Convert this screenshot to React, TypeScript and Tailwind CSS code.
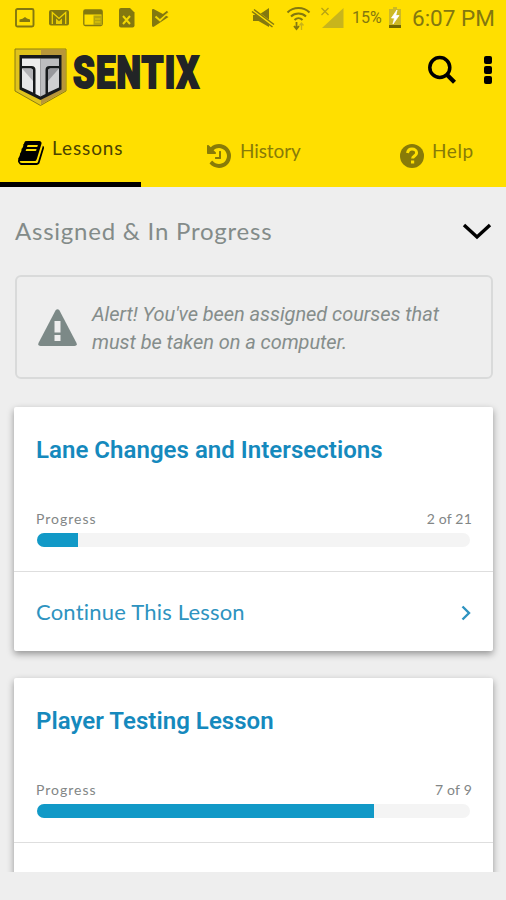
/**
 * Lessons screen
 *
 * Status bar, branded header with tabs, and the list of assigned lessons.
 */

import type { ReactNode } from "react";

// ---------------------------------------------------------------------------
// Types
// ---------------------------------------------------------------------------

interface Lesson {
  title: string;
  done: number;
  total: number;
  percent: number;
  action?: string;
}

const LESSONS: Lesson[] = [
  { title: "Lane Changes and Intersections", done: 2, total: 21, percent: 9.5, action: "Continue This Lesson" },
  { title: "Player Testing Lesson", done: 7, total: 9, percent: 77.8 },
];

// ---------------------------------------------------------------------------
// Status bar
// ---------------------------------------------------------------------------

function StatusBar() {
  return (
    <div className="flex h-9 items-center justify-between pl-[15px] pr-3 text-[#83780f]">
      <div className="flex items-center gap-[14px]">
        <svg width="20" height="20" viewBox="0 0 20 20" fill="none">
          <rect x="1" y="1" width="17.500" height="17.500" rx="1.500" stroke="currentColor" strokeWidth="1.900" />
          <path d="M4.500 14v-2.500l3-.8 2.500-1.800 2 1.600 3 1v2.500z" fill="currentColor" />
        </svg>
        <svg width="20" height="20" viewBox="0 0 20 20" fill="none">
          <rect x="0" y="2" width="20" height="15.500" rx="2" fill="currentColor" />
          <path d="M4 16.500V7l6 5.300L16 7v9.500h-3.200v-5L10 14l-2.800-2.500v5z" fill="currentColor" />
          <path d="M3.300 16V4.500l6.700 6 6.700-6V16" stroke="#f0d300" strokeWidth="1.300" />
          <path d="M7 16v-5.500l3 2.700 3-2.700V16z" fill="#e8cc04" />
        </svg>
        <svg width="20" height="20" viewBox="0 0 20 20" fill="none">
          <rect x=".8" y="2" width="18.400" height="15.500" rx="1.500" stroke="currentColor" strokeWidth="1.300" />
          <path d="M1 2h18v4.500H1z" fill="currentColor" />
          <path d="M10.500 7.500h8.500V17h-8.500z" fill="#b5a50f" />
          <path d="M12 11h5.500M12 14h5.500" stroke="#e8cc04" strokeWidth="1" />
        </svg>
        <svg width="20" height="20" viewBox="0 0 20 20" fill="none">
          <path d="M2 2a2 2 0 0 1 2-2h9l4.500 4.500V17.500a2 2 0 0 1-2 2H4a2 2 0 0 1-2-2z" fill="currentColor" />
          <path d="M6 8l7 8M13 8l-7 8" stroke="#f3d702" strokeWidth="2" />
        </svg>
        <svg width="20" height="20" viewBox="0 0 20 20" fill="none">
          <path d="M1 2.200C1 1 2 .6 3 1.200L17.500 9 2.800 18.800C2 19.200 1 18.800 1 17.600z" fill="currentColor" />
          <path d="M4.500 8.500l4.500 4L17.500 4" stroke="#f3d702" strokeWidth="2" />
          <path d="M9 9.500l7.500-6" stroke="currentColor" strokeWidth="1.800" />
        </svg>
      </div>

      <div className="flex items-center">
        <svg width="24" height="22" viewBox="0 0 24 22" fill="none">
          <path d="M2 8h5.500L18 1v19L7.500 14H2z" fill="currentColor" />
          <path d="M1 2.500L23 19" stroke="#ffdf00" strokeWidth="4" />
          <path d="M1 4.500L21.500 20M3 2.500L23 17.500" stroke="currentColor" strokeWidth="1.500" />
        </svg>
        <svg className="ml-[11px]" width="25" height="26" viewBox="0 0 25 26" fill="none">
          <g stroke="currentColor" strokeWidth="2">
            <path d="M1.500 7.500c6-6 16-6 22 0" />
            <path d="M5 11.500c4-4 11-4 15 0" />
            <path d="M8.500 15c2.500-2.500 5.500-2.500 8 0" />
          </g>
          <path d="M10.500 17v6M8 21l2.500 3 2.500-3" stroke="currentColor" strokeWidth="1.800" />
          <path d="M15.500 25v-6M13.500 20.500l2-2.500 2 2.500" stroke="#c9b318" strokeWidth="1.300" />
        </svg>
        <svg className="ml-[9px]" width="24" height="24" viewBox="0 0 24 24" fill="none">
          <path d="M23.500 2v20H2z" fill="#c8b51c" />
          <path d="M1.500 2l7 7M8.500 2l-7 7" stroke="#b7a313" strokeWidth="1.300" />
        </svg>
        <span className="ml-[8px] w-[31px] whitespace-nowrap font-[Roboto,sans-serif] text-[16px] leading-none">15%</span>
        <svg className="ml-[5px]" width="14" height="22" viewBox="0 0 14 22" fill="none">
          <path d="M5 0h4v2h4v19H1V2h4z" fill="#cdb925" />
          <path d="M1 18h12v3H1z" fill="#716800" />
          <path d="M9 3L3.500 11h3L5 17l6-8.500H7.800z" fill="white" stroke="white" strokeWidth=".8" />
        </svg>
        <span className="ml-[10px] w-[82px] whitespace-nowrap font-[Roboto,sans-serif] text-[22.500px] leading-none">6:07 PM</span>
      </div>
    </div>
  );
}

// ---------------------------------------------------------------------------
// Brand logo: shield and wordmark
// ---------------------------------------------------------------------------

function Logo() {
  return (
    <svg className="overflow-visible" width="188" height="60" viewBox="0 0 188 60">
      <path d="M1 1h51v42L26.500 57.500 1 43z" fill="#e0c31c" stroke="#8a7d14" strokeWidth="1" />
      <path d="M27 1.500h24.500V42.500L27 56.500z" fill="#b8963a" />
      <path d="M5.500 7h42v34.500L26.500 52 5.500 41.500z" fill="#17191b" />
      <path d="M8 10.500h18.500v38L21.500 46V22q0-4-4-4H8z" fill="#ededed" />
      <path d="M26.500 10.500H45V18h-9.500q-4 0-4 4v24l-5 2.500z" fill="#bcbcbf" />
      <path d="M8 20.500h8.500q2.500 0 2.500 2.500V44.500L8 39.500z" fill="#e6e6e8" />
      <path d="M8 20.500h8.500q2.500 0 2.500 2.500V33z" fill="#b3b3b7" />
      <path d="M45 20.500h-8.500q-2.500 0-2.500 2.500V44.500L45 39.500z" fill="#cfcfd2" />
      <path d="M45 20.500h-8.500q-2.500 0-2.500 2.500V33z" fill="#98989d" />
      <text
        x="59"
        y="39.500"
        textLength="127"
        lengthAdjust="spacingAndGlyphs"
        letterSpacing="1.500"
        fontFamily="Roboto, sans-serif"
        fontWeight="900"
        fontSize="44"
        fill="#222426"
        stroke="#222426"
        strokeWidth="2"
      >
        SENTIX
      </text>
    </svg>
  );
}

// ---------------------------------------------------------------------------
// Tabs
// ---------------------------------------------------------------------------

const BOOK =
  "M1639 478q40 57 18 129l-275 906q-19 64-76.5 107.5t-122.5 43.5h-923q-77 0-148.5-53.5t-99.5-131.5q-24-67-2-127 0-4 3-27t4-37q1-8-3-21.5t-3-19.5q2-11 8-21t16.5-23.5 16.5-23.5q23-38 45-91.5t30-91.5q3-10 .5-30t-.5-28q3-11 17-28t17-23q21-36 42-92t25-90q1-9-2.5-32t.5-28q4-13 22-30.5t22-22.5q19-26 42.5-84.5t27.5-96.5q1-8-3-25.5t-2-26.5q2-8 9-18t18-23 17-21q8-12 16.5-30.5t15-35 16-36 19.5-32 26.5-23.5 36-11.5 47.5 5.5l-1 3q38-9 51-9h761q74 0 114 56t18 130l-274 906q-36 119-71.5 153.5t-128.5 34.5h-869q-27 0-38 15-11 16-1 43 24 70 144 70h923q29 0 56-15.5t35-41.5l300-987q7-22 5-57 38 15 59 43zm-1064 2q-4 13 2 22.5t20 9.5h608q13 0 25.5-9.5t16.5-22.5l21-64q4-13-2-22.5t-20-9.5h-608q-13 0-25.5 9.5t-16.5 22.5zm-83 256q-4 13 2 22.5t20 9.5h608q13 0 25.5-9.5t16.5-22.5l21-64q4-13-2-22.5t-20-9.5h-608q-13 0-25.5 9.5t-16.5 22.5z";

const HISTORY =
  "M1664 896q0 156-61 298t-164 245-245 164-298 61q-172 0-327-72.5t-264-204.5q-7-10-6.5-22.5t8.5-20.5l137-138q10-9 25-9 16 2 23 12 73 95 179 147t225 52q104 0 198.5-40.5t163.5-109.5 109.5-163.5 40.5-198.5-40.5-198.5-109.5-163.5-163.5-109.5-198.5-40.5q-98 0-188 35.5t-160 101.5l137 138q31 30 14 69-17 40-59 40h-448q-26 0-45-19t-19-45v-448q0-42 40-59 39-17 69 14l130 129q107-101 244.5-156.5t284.5-55.5q156 0 298 61t245 164 164 245 61 298zm-640-288v448q0 14-9 23t-23 9h-320q-14 0-23-9t-9-23v-64q0-14 9-23t23-9h224v-352q0-14 9-23t23-9h64q14 0 23 9t9 23z";

function Tab({ icon, children, className }: { icon: ReactNode; children: string; className: string }) {
  return (
    <button className={`flex h-full items-start whitespace-nowrap text-left text-[19px] leading-6 ${className}`}>
      {icon}
      {children}
    </button>
  );
}

function Tabs() {
  return (
    <nav className="flex h-[62px] font-[Lato,sans-serif]">
      <Tab
        className="w-[141px] border-b-[5px] border-black pl-[18px] pt-[11px] tracking-[0.9px] text-[#4b4300]"
        icon={
          <svg className="mr-[6px] mt-[3px] shrink-0 text-black" width="28" height="28" viewBox="0 0 1792 1792" fill="currentColor">
            <path d={BOOK} />
          </svg>
        }
      >
        Lessons
      </Tab>
      <Tab
        className="w-[225px] pl-[64px] pt-[14px] tracking-[-0.1px] text-[#887b08]"
        icon={
          <svg className="mr-[7px] mt-[3px] shrink-0" width="28" height="28" viewBox="0 0 1792 1792" fill="currentColor">
            <path d={HISTORY} />
          </svg>
        }
      >
        History
      </Tab>
      <Tab
        className="w-[140px] pl-[34px] pt-[14px] tracking-[0.6px] text-[#887b08]"
        icon={
          <svg className="mr-[8px] mt-[5px] shrink-0" width="24" height="24" viewBox="0 0 24 24">
            <circle cx="12" cy="12" r="12" fill="currentColor" />
            <path d="M7.500 9c.5-3 2.200-4 4.500-4 2.600 0 4.600 1.500 4.600 3.900 0 3-4 3.100-4 5.600" fill="none" stroke="#ffdf00" strokeWidth="3" />
            <path d="M11 16.500h3.200v3H11z" fill="#ffdf00" />
          </svg>
        }
      >
        Help
      </Tab>
    </nav>
  );
}

function Header() {
  return (
    <header className="bg-[#ffdf00]">
      <StatusBar />
      <div className="flex h-[89px] items-start pl-[14px] pt-3">
        <Logo />
        <svg className="ml-[225px] mt-[7px]" width="30" height="30" viewBox="0 0 30 30" fill="none" stroke="black">
          <circle cx="12.800" cy="12.500" r="10" strokeWidth="3.500" />
          <path d="M20 19.800l7.500 7.500" strokeWidth="4.200" />
        </svg>
        <div className="ml-[27px] mt-[8px] flex flex-col gap-[2px]">
          <span className="size-2 rounded-[2px] bg-black" />
          <span className="size-2 rounded-[2px] bg-black" />
          <span className="size-2 rounded-[2px] bg-black" />
        </div>
      </div>
      <Tabs />
    </header>
  );
}

// ---------------------------------------------------------------------------
// Lesson card
// ---------------------------------------------------------------------------

function LessonCard({ lesson }: { lesson: Lesson }) {
  return (
    <article className="h-[244px] shrink-0 rounded-[2px] bg-white shadow-[0_3px_7px_rgba(0,0,0,0.38)]">
      <div className="flex h-[165px] flex-col border-b border-[#dedede] px-[22px] pt-[27px]">
        <h2 className="whitespace-nowrap font-[Roboto,sans-serif] text-[24px] font-semibold leading-8 tracking-[0.04px] text-[#1589bd]">
          {lesson.title}
        </h2>
        <div className="mt-[43px] flex justify-between font-[Lato,sans-serif] text-[14px] leading-5 text-[#828686]">
          <span className="tracking-[1px]">Progress</span>
          <span className="-mr-px tracking-[0.200px]">{`${lesson.done} of ${lesson.total}`}</span>
        </div>
        <div className="ml-px mt-[4px] h-[14px] w-[433px] overflow-hidden rounded-full bg-[#f4f4f4]">
          <div className="h-full bg-[#1199c7]" style={{ width: `${lesson.percent}%` }} />
        </div>
      </div>
      {lesson.action && (
        <div className="flex h-[79px] items-center justify-between px-[22px] font-[Lato,sans-serif] text-[22px] tracking-[0.2px] text-[#2e93c0]">
          <span>{lesson.action}</span>
          <svg className="mt-[2px]" width="10" height="16" viewBox="0 0 10 16" fill="none">
            <path d="M1.500 1.500L8 8l-6.500 6.500" stroke="currentColor" strokeWidth="2.400" />
          </svg>
        </div>
      )}
    </article>
  );
}

// ---------------------------------------------------------------------------
// Page
// ---------------------------------------------------------------------------

export default function App() {
  return (
    <div className="h-[900px] w-[506px] overflow-hidden bg-[#eeeeee]">
      <Header />
      <main className="flex h-[685px] flex-col overflow-hidden pl-[14px] pr-[13px]">
        <div className="flex h-[88px] shrink-0 items-center justify-between pr-px font-[Lato,sans-serif] text-[24px] tracking-[0.77px] text-[#838b89]">
          <span className="-mt-px pl-px">Assigned &amp; In Progress</span>
          <svg width="30" height="18" viewBox="0 0 30 18" fill="none">
            <path d="M2 3l13 12L28 3" stroke="black" strokeWidth="3.400" />
          </svg>
        </div>

        <div className="ml-px flex h-[104px] shrink-0 items-center rounded-md border-2 border-[#d9dada] pl-[21px]">
          <svg className="mr-[15px] shrink-0" width="39" height="37" viewBox="0 0 39 37">
            <path d="M17.500 1.500q2-2.500 4 0L38.500 34q1 3-2 3h-34q-3 0-2-3z" fill="#7c8987" />
            <path d="M16.500 12h6v11.500h-6zM16.500 26h6v6h-6z" fill="#eeeeee" />
          </svg>
          <p className="whitespace-nowrap pt-px font-[Roboto,sans-serif] text-[20px] italic leading-7 tracking-[-0.06px] text-[#858d8b]">
            Alert! You've been assigned courses that
            <br />
            must be taken on a computer.
          </p>
        </div>

        <div className="mt-[28px] flex flex-col gap-[27px]">
          {LESSONS.map((lesson) => (
            <LessonCard key={lesson.title} lesson={lesson} />
          ))}
        </div>
      </main>
    </div>
  );
}
